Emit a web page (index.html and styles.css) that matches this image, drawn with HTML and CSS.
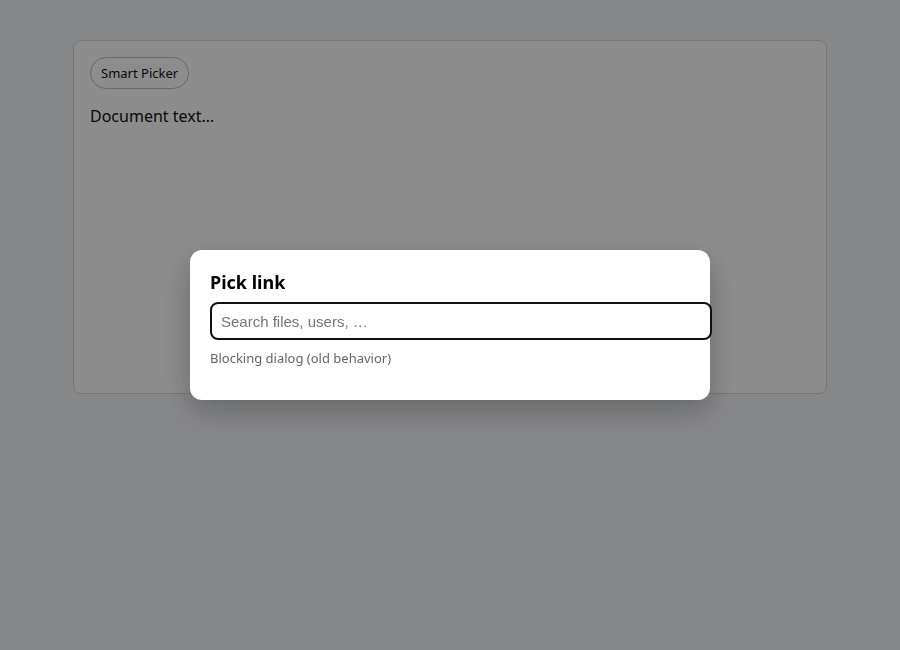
FILE: index.html
```html
<!DOCTYPE html>
<html lang="en">
<head>
  <meta charset="UTF-8" />
  <meta name="viewport" content="width=device-width, initial-scale=1.0"/>
  <title>Smart Picker</title>
  <link rel="stylesheet" href="styles.css">
</head>
<body>
  <div class="editor">
    <button class="picker-btn">Smart Picker</button>
    <p class="doc-text">Document text…</p>
  </div>

  <div class="backdrop">
    <div class="dialog">
      <h2>Pick link</h2>
      <input class="search" type="text" placeholder="Search files, users, …" autofocus>
      <p class="hint">Blocking dialog (old behavior)</p>
    </div>
  </div>
</body>
</html>
```

FILE: styles.css
```css
body {
  font-family: "Noto Sans", "Open Sans", sans-serif;
  margin: 0;
  padding: 40px 73px;
  background: #f5f6f9;
  color: #111;
}
.editor {
  height: 354px;
  box-sizing: border-box;
  background: #fff;
  border: 1px solid #d8d8d8;
  border-radius: 8px;
  padding: 16px;
}
.picker-btn {
  font-family: "Noto Sans", sans-serif;
  font-size: 13px;
  color: #111;
  background: #fff;
  border: 1px solid #bdbdbd;
  border-radius: 16px;
  height: 32px;
  padding: 0 10px;
}
.doc-text {
  font-size: 16px;
  margin: 16px 0 0;
}
.backdrop {
  position: fixed;
  inset: 0;
  background: rgba(0, 0, 0, 0.45);
  display: flex;
  align-items: center;
  justify-content: center;
}
.dialog {
  width: 520px;
  height: 150px;
  box-sizing: border-box;
  background: #fff;
  border-radius: 12px;
  padding: 20px;
  box-shadow: 0 10px 30px rgba(0, 0, 0, 0.25);
}
.dialog h2 {
  font-size: 18px;
  color: #000;
  margin: 0 0 8px;
  line-height: 24px;
}
.search {
  width: 502px;
  height: 38px;
  box-sizing: border-box;
  font-family: "Liberation Sans", Arial, sans-serif;
  font-size: 15px;
  padding: 0 9px;
  border: 2px solid #111;
  border-radius: 8px;
  outline: none;
  margin: 0;
}
.hint {
  font-size: 13px;
  color: #666;
  margin: 9px 0 0;
}
```
